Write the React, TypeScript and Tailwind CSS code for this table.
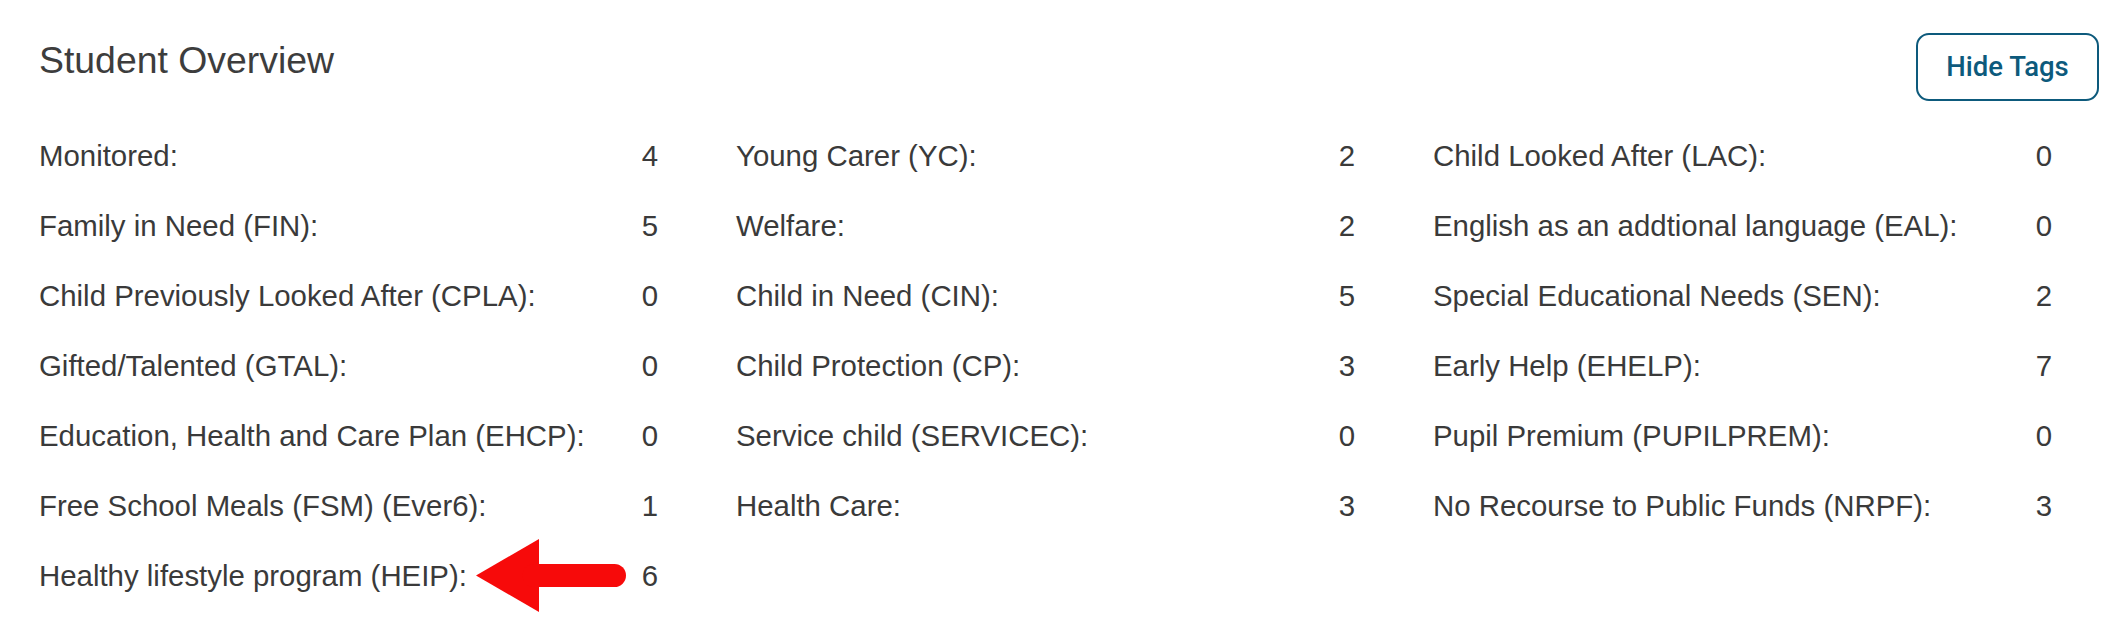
const columns: { label: string; value: number; arrow?: boolean }[][] = [
  [
    { label: "Monitored:", value: 4 },
    { label: "Family in Need (FIN):", value: 5 },
    { label: "Child Previously Looked After (CPLA):", value: 0 },
    { label: "Gifted/Talented (GTAL):", value: 0 },
    { label: "Education, Health and Care Plan (EHCP):", value: 0 },
    { label: "Free School Meals (FSM) (Ever6):", value: 1 },
    { label: "Healthy lifestyle program (HEIP):", value: 6, arrow: true },
  ],
  [
    { label: "Young Carer (YC):", value: 2 },
    { label: "Welfare:", value: 2 },
    { label: "Child in Need (CIN):", value: 5 },
    { label: "Child Protection (CP):", value: 3 },
    { label: "Service child (SERVICEC):", value: 0 },
    { label: "Health Care:", value: 3 },
  ],
  [
    { label: "Child Looked After (LAC):", value: 0 },
    { label: "English as an addtional language (EAL):", value: 0 },
    { label: "Special Educational Needs (SEN):", value: 2 },
    { label: "Early Help (EHELP):", value: 7 },
    { label: "Pupil Premium (PUPILPREM):", value: 0 },
    { label: "No Recourse to Public Funds (NRPF):", value: 3 },
  ],
];

function Arrow() {
  return (
    <svg
      className="absolute left-[437px] top-[-2px]"
      width="150"
      height="73"
      viewBox="0 0 150 73"
    >
      <polygon points="0,36.5 63,0 63,73" fill="#f70a0a" />
      <line
        x1="58"
        y1="36.5"
        x2="138.5"
        y2="36.5"
        stroke="#f70a0a"
        strokeWidth="23"
        strokeLinecap="round"
      />
    </svg>
  );
}

export default function App() {
  return (
    <div className="w-[2122px] h-[622px] bg-white overflow-hidden pl-[39px] pr-[23px] pt-[33px] font-['Liberation_Sans',Arial,sans-serif] text-[#3a3a3a]">
      <div className="flex items-start justify-between">
        <h2 className="mt-[9px] text-[37.4px] leading-[36px] font-normal text-[#3d3d3d]">
          Student Overview
        </h2>
        <button className="h-[68px] w-[183px] rounded-[13px] border-2 border-[#0d5a7c] bg-white text-[#0d5a7c] font-['Roboto',sans-serif] font-medium text-[27.5px] flex items-center justify-center">
          Hide Tags
        </button>
      </div>
      <div className="mt-[20px] flex gap-[78px]">
        {columns.map((col, i) => (
          <div key={i} className="w-[619px] flex flex-col">
            {col.map((row) => (
              <div
                key={row.label}
                className="relative h-[70px] flex items-center justify-between text-[29.4px] leading-[70px]"
              >
                <span>{row.label}</span>
                <span>{row.value}</span>
                {row.arrow && <Arrow />}
              </div>
            ))}
          </div>
        ))}
      </div>
    </div>
  );
}
